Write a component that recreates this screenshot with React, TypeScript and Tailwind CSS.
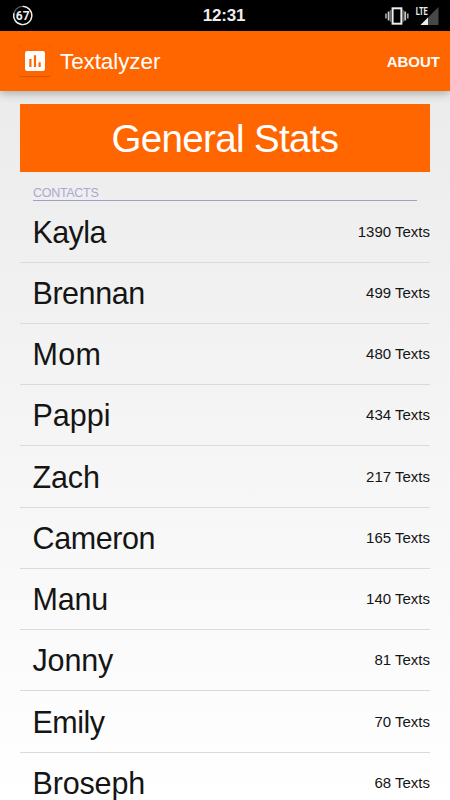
import React from 'react';

const contacts = [
  { name: 'Kayla', texts: 1390, tracking: 'tracking-[-0.6px]' },
  { name: 'Brennan', texts: 499, tracking: 'tracking-[-0.45px]' },
  { name: 'Mom', texts: 480, tracking: 'tracking-[0.3px]' },
  { name: 'Pappi', texts: 434, tracking: 'tracking-[0px]' },
  { name: 'Zach', texts: 217, tracking: 'tracking-[-0.15px]' },
  { name: 'Cameron', texts: 165, tracking: 'tracking-[-0.4px]' },
  { name: 'Manu', texts: 140, tracking: 'tracking-[-0.2px]' },
  { name: 'Jonny', texts: 81, tracking: 'tracking-[-0.15px]' },
  { name: 'Emily', texts: 70, tracking: 'tracking-[-0.5px]' },
  { name: 'Broseph', texts: 68, tracking: 'tracking-[-0.15px]' },
];

function StatusBar() {
  return (
    <div className="grid h-[31px] shrink-0 grid-cols-3 items-center bg-black pl-3 pr-[11px] text-[#eeeeee]">
      {/* Battery ring */}
      <svg width="22" height="22" viewBox="0 0 22 22" className="mt-px">
        <circle cx="10.7" cy="10.5" r="9.1" fill="none" stroke="#666" strokeWidth="1.2" />
        <path d="M10.7 1.4a9.1 9.1 0 1 1-8.8 6.8" fill="none" stroke="#eee" strokeWidth="1.4" />
        <text x="10.7" y="14.6" textAnchor="middle" fill="#eee" fontSize="12" className="font-['Roboto',sans-serif] font-bold">67</text>
      </svg>
      <span className="-ml-[3px] text-center text-[17px] font-bold leading-none tracking-[-0.2px]">12:31</span>
      <div className="flex justify-end">
        {/* Vibrate mode */}
        <svg width="24" height="18" viewBox="0 0 24 18" fill="none">
          <path d="M1 6.5v5M22.8 6.5v5" stroke="#aaa" strokeWidth="1.6" />
          <path d="M3.6 4.5v9M20.2 4.5v9" stroke="#ccc" strokeWidth="1.8" />
          <path d="M5.6 3v12M18.2 3v12" stroke="#777" strokeWidth="1" />
          <rect x="7.6" y="1.3" width="8.8" height="15.4" stroke="#eee" strokeWidth="2" />
        </svg>
        {/* Mobile signal */}
        <svg width="24" height="22" viewBox="0 -4 24 22" className="-mt-1 ml-1.5 overflow-visible">
          <path d="M23.5 0v18H5.5z" fill="#484848" />
          <path d="M13 10.5V18H5.5z" fill="#eee" />
          <path d="M0 0h13v9H0z" fill="#000" />
          <text x="0.8" y="8.4" fill="#eee" fontSize="11" textLength="12" lengthAdjust="spacingAndGlyphs" className="font-['Roboto',sans-serif] font-bold">LTE</text>
        </svg>
      </div>
    </div>
  );
}

function ActionBar() {
  return (
    <header className="flex h-[60px] shrink-0 items-center bg-[#ff6600] pl-[19px] pr-2.5 text-white shadow-[0_2px_9px_rgba(0,0,0,0.3)]">
      <div className="flex size-8 items-center justify-center rounded-[3px] border-b border-[#d95700] shadow-[0_0_1px_rgba(0,0,0,0.25)]">
        <svg width="20" height="20" viewBox="0 0 20 20">
          <rect width="20" height="20" rx="2.2" fill="#fff" />
          <path d="M4.3 8h2.2v8H4.3zM8.9 4.3h2.2V16H8.9zM13.5 11.2h2.2V16h-2.2z" fill="#ff6600" />
        </svg>
      </div>
      <h1 className="ml-[9px] pt-[3px] text-[22.5px] leading-none tracking-[-0.1px]">Textalyzer</h1>
      <button className="ml-auto text-[15px] font-bold leading-none">ABOUT</button>
    </header>
  );
}

export default function App() {
  return (
    <div className="flex h-[800px] w-[450px] flex-col overflow-hidden bg-linear-to-b from-[#e9e9e9] to-white font-['Liberation_Sans',Arial,sans-serif]">
      <StatusBar />
      <ActionBar />
      <main className="px-5 pt-[13px]">
        <h2 className="flex h-[68px] items-center justify-center bg-[#ff6600] pt-[3px] text-[38.5px] leading-none tracking-[-0.65px] text-white">
          General Stats
        </h2>
        <div className="ml-[13px] mr-[13px] mt-[14px] h-[15px] border-b border-[#a09fcc]">
          <h3 className="text-[12.5px] leading-[14px] tracking-[-0.3px] text-[#aaa9cd]">CONTACTS</h3>
        </div>
        <ul className="pt-[0.3px]">
          {contacts.map((contact) => (
            <li
              key={contact.name}
              className="flex h-[61.25px] items-center justify-between border-b border-[#dadada] pl-[12.5px] pt-px text-[#151515]"
            >
              <span className={`text-[30.5px] leading-none ${contact.tracking}`}>{contact.name}</span>
              <span className="pb-[1.4px] text-[15px] leading-none">{contact.texts} Texts</span>
            </li>
          ))}
        </ul>
      </main>
    </div>
  );
}
